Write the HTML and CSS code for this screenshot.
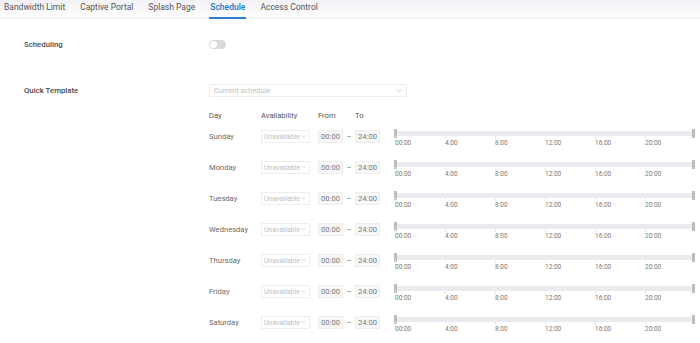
FILE: index.html
```html
<!DOCTYPE html>
<html lang="en">
<head>
  <meta charset="UTF-8" />
  <title>Schedule</title>
  <link rel="stylesheet" href="styles.css">
</head>
<body>

  <nav class="tabs">
    <span class="tab">Bandwidth Limit</span>
    <span class="tab">Captive Portal</span>
    <span class="tab">Splash Page</span>
    <span class="tab active">Schedule</span>
    <span class="tab">Access Control</span>
  </nav>

  <div class="page">
    <div class="field field-toggle">
      <div class="label">Scheduling</div>
      <div class="toggle"><span class="knob"></span></div>
    </div>

    <div class="field field-template">
      <div class="label">Quick Template</div>
      <div class="body">
        <div class="select wide">
          <span>Current schedule</span>
          <svg width="6" height="4" viewBox="0 0 6 4"><polyline points="0.5,0.5 3,3 5.5,0.5" fill="none" stroke="#c4c4c4" stroke-width="0.8"/></svg>
        </div>

        <div class="sched">
          <div class="sched-head">
            <span class="c-day">Day</span>
            <span class="c-avail">Availability</span>
            <span class="c-from">From</span>
            <span class="c-to">To</span>
          </div>
          <div id="rows"></div>
        </div>
      </div>
    </div>
  </div>

  <script>
    const days = ['Sunday', 'Monday', 'Tuesday', 'Wednesday', 'Thursday', 'Friday', 'Saturday'];
    const ticks = ['00:00', '4:00', '8:00', '12:00', '16:00', '20:00'];
    const rows = document.getElementById('rows');

    days.forEach(day => {
      const row = document.createElement('div');
      row.className = 'sched-row';
      row.innerHTML =
        '<span class="c-day day">' + day + '</span>' +
        '<div class="c-avail"><div class="select small"><span>Unavailable</span>' +
        '<svg width="5" height="3" viewBox="0 0 6 4"><polyline points="0.5,0.5 3,3 5.5,0.5" fill="none" stroke="#c4c4c4" stroke-width="0.9"/></svg></div></div>' +
        '<span class="c-from time">00:00</span>' +
        '<span class="dash">&ndash;</span>' +
        '<span class="c-to time">24:00</span>' +
        '<div class="slider"><div class="track"><span class="handle left"></span><span class="handle right"></span></div>' +
        '<div class="ticks">' + ticks.map(t => '<span>' + t + '</span>').join('') + '</div></div>';
      rows.appendChild(row);
    });
  </script>
</body>
</html>
```

FILE: styles.css
```css
html, body {
  margin: 0;
  padding: 0;
  background: white;
  font-family: Roboto, 'Liberation Sans', sans-serif;
  color: #333;
}

.tabs {
  display: flex;
  gap: 13px;
  height: 17px;
  padding-left: 3px;
  background: linear-gradient(#f2f2f7, #fdfdfd);
  border-bottom: 2px solid #f3f3f5;
}

.tab {
  font-size: 8.5px;
  line-height: 15px;
  color: #555;
  padding: 0 1px;
}

.tab.active {
  color: #2474c4;
  font-weight: 500;
  border-bottom: 2px solid #2f7fcf;
  box-sizing: border-box;
  margin-bottom: -2px;
  height: 19px;
}

.page {
  padding-left: 24px;
}

.field {
  display: flex;
}

.label {
  width: 185px;
  flex: none;
  font-size: 7.8px;
  font-weight: 500;
  color: #4a4a4a;
}

.field-toggle {
  margin-top: 20px;
  height: 10px;
  align-items: center;
}

.toggle {
  width: 17px;
  height: 9px;
  border-radius: 5px;
  background: #dadada;
  position: relative;
}

.toggle .knob {
  position: absolute;
  top: 1px;
  left: 1px;
  width: 7px;
  height: 7px;
  border-radius: 50%;
  background: white;
}

.field-template {
  margin-top: 35px;
}

.field-template .label {
  line-height: 13px;
}

.select {
  display: flex;
  align-items: center;
  justify-content: space-between;
  box-sizing: border-box;
  border: 1px solid #ededed;
  color: #c0c0c0;
  font-size: 7.5px;
}

.select.wide {
  width: 198px;
  height: 13px;
  padding: 0 4px;
}

.select.small {
  width: 49px;
  height: 13px;
  padding: 0 3px 0 2px;
  font-size: 7px;
}

.sched {
  margin-top: 12px;
  font-size: 7.6px;
}

.sched-head, .sched-row {
  display: flex;
  align-items: flex-start;
}

.sched-head {
  height: 14px;
  line-height: 14px;
  color: #555;
  margin-bottom: 7px;
}

.sched-row {
  height: 31px;
}

.c-day { width: 52px; flex: none; }
.c-avail { width: 57px; flex: none; }
.c-from { width: 37px; flex: none; }
.c-to { width: 26px; flex: none; }

.day {
  line-height: 13px;
  color: #6a6a6a;
}

.time {
  box-sizing: border-box;
  height: 13px;
  line-height: 11px;
  width: 25px;
  text-align: center;
  background: #f7f7f7;
  border: 1px solid #ededed;
  color: #777;
  font-size: 7.6px;
}

.dash {
  width: 12px;
  flex: none;
  text-align: center;
  line-height: 13px;
  color: #777;
}

.slider {
  margin-left: 15px;
  margin-top: -1px;
  width: 300px;
}

.track {
  position: relative;
  height: 5px;
  margin-top: 2px;
  background: #eaeaef;
}

.handle {
  position: absolute;
  top: -2px;
  width: 3px;
  height: 9px;
  background: #bdbdc1;
}

.handle.left { left: -1px; }
.handle.right { right: 0; }

.ticks {
  display: flex;
  margin-top: 3px;
}

.ticks span {
  position: relative;
  width: 50px;
  font-size: 6.5px;
  line-height: 9px;
  color: #777;
}

.ticks span::before {
  content: '';
  position: absolute;
  left: 0;
  top: -3px;
  width: 1px;
  height: 3px;
  background: #e6e6ea;
}
```
